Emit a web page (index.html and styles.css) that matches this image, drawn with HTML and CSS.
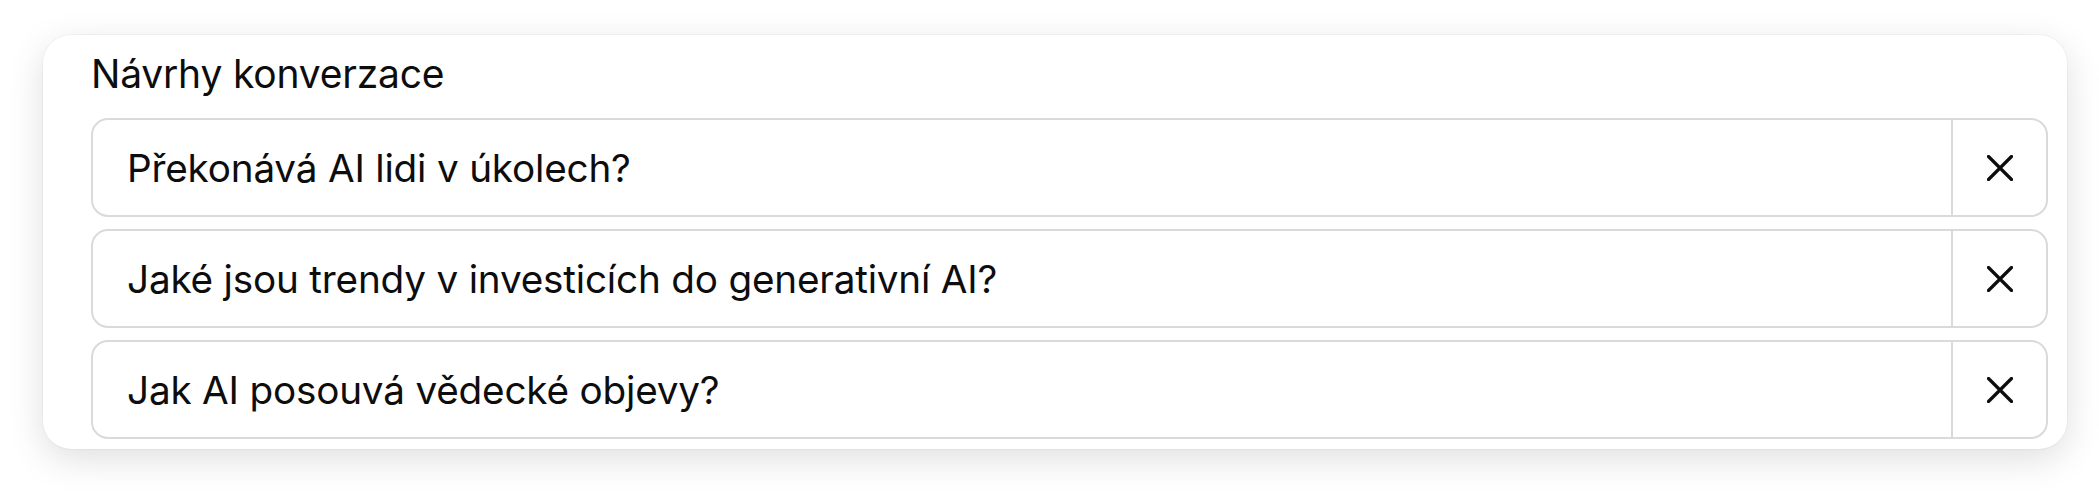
FILE: index.html
```html
<!DOCTYPE html>
<html lang="cs">
<head>
<meta charset="utf-8">
<title>Návrhy konverzace</title>
<link rel="stylesheet" href="styles.css">
</head>
<body>
<section class="card">
  <h2 class="title">Návrhy konverzace</h2>
  <ul class="list">
    <li class="item">
      <button class="item-text">Překonává AI lidi v úkolech?</button>
      <button class="item-close" aria-label="Zavřít">
        <svg class="x-icon" viewBox="0 0 26 26" width="26" height="26"><path d="M1.5 1.5 L24.5 24.5 M24.5 1.5 L1.5 24.5"/></svg>
      </button>
    </li>
    <li class="item">
      <button class="item-text">Jaké jsou trendy v investicích do generativní AI?</button>
      <button class="item-close" aria-label="Zavřít">
        <svg class="x-icon" viewBox="0 0 26 26" width="26" height="26"><path d="M1.5 1.5 L24.5 24.5 M24.5 1.5 L1.5 24.5"/></svg>
      </button>
    </li>
    <li class="item">
      <button class="item-text">Jak AI posouvá vědecké objevy?</button>
      <button class="item-close" aria-label="Zavřít">
        <svg class="x-icon" viewBox="0 0 26 26" width="26" height="26"><path d="M1.5 1.5 L24.5 24.5 M24.5 1.5 L1.5 24.5"/></svg>
      </button>
    </li>
  </ul>
</section>
</body>
</html>
```
FILE: styles.css
```css
* { box-sizing: border-box; }
html, body {
  margin: 0;
  background: #ffffff;
  font-family: Inter, "Liberation Sans", Arial, sans-serif;
  color: #0d0d0d;
}
body {
  min-height: 496px;
  padding: 35px 0 0 43px;
}

.card {
  width: 2024px;
  padding: 17px 19px 10px 48px;
  background: #ffffff;
  border-radius: 28px;
  box-shadow: 0 10px 36px rgba(0, 0, 0, 0.13), 0 0 0 1px rgba(0, 0, 0, 0.03);
}

.title {
  margin: 0 0 22px 0;
  font-size: 39px;
  line-height: 44px;
  font-weight: 400;
  letter-spacing: -0.2px;
}

.list {
  list-style: none;
  margin: 0;
  padding: 0;
  display: flex;
  flex-direction: column;
  gap: 12px;
}

.item {
  display: flex;
  height: 99px;
  border: 2px solid #dadada;
  border-radius: 17px;
  overflow: hidden;
}

.item-text {
  flex: 1;
  display: flex;
  align-items: center;
  padding: 0 0 0 34px;
  border: 0;
  background: transparent;
  font: inherit;
  font-size: 38.7px;
  letter-spacing: -0.2px;
  color: #0d0d0d;
  text-align: left;
}

.item-close {
  width: 95px;
  display: flex;
  align-items: center;
  justify-content: center;
  border: 0;
  border-left: 2px solid #dadada;
  background: transparent;
  padding: 0;
}

.x-icon path {
  fill: none;
  stroke: #0d0d0d;
  stroke-width: 3.2;
  stroke-linecap: round;
}
```
